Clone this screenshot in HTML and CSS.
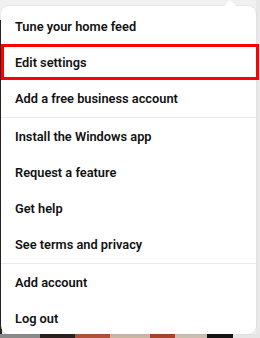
FILE: index.html
```html
<!DOCTYPE html>
<html lang="en">
<head>
  <meta charset="UTF-8" />
  <title>Account menu</title>
  <link rel="stylesheet" href="styles.css">
</head>
<body>
  <div class="menu">
    <span class="arrow"></span>
    <div class="item">Tune your home feed</div>
    <div class="item active">Edit settings</div>
    <div class="item">Add a free business account</div>
    <div class="sep"></div>
    <div class="item">Install the Windows app</div>
    <div class="item">Request a feature</div>
    <div class="item">Get help</div>
    <div class="item">See terms and privacy</div>
    <div class="sep"></div>
    <div class="item">Add account</div>
    <div class="item">Log out</div>
  </div>
</body>
</html>
```

FILE: styles.css
```css
* {
  margin: 0;
  padding: 0;
  box-sizing: border-box;
}
body {
  width: 260px;
  height: 338px;
  overflow: hidden;
  font-family: Roboto, "Noto Sans", Arial, sans-serif;
  background:
    linear-gradient(to right, #8a8a8a 0 40px, #2b2220 40px 75px, #b0513a 75px 110px, #c9b7a4 110px 150px, #a8432e 150px 175px, #cbbfb1 175px 207px, #141414 207px 233px, #e6e6e6 233px) bottom / 100% 4px no-repeat,
    linear-gradient(to right, #2d2222 0 2px, transparent 2px) 0 20px / 100% 100% no-repeat,
    linear-gradient(to right, transparent 256px, #e8e8e8 256px),
    #f1f1f1;
  padding: 6px 4px 4px 1px;
}
.menu {
  position: relative;
  background: #fff;
  border-radius: 8px;
  box-shadow: 0 0 2px rgba(0, 0, 0, 0.12);
  padding: 2px 0 0;
  height: 328px;
}
.arrow {
  position: absolute;
  top: -6px;
  left: 221px;
  width: 16px;
  height: 8px;
  background: #fff;
  clip-path: polygon(0 100%, 50% 0, 100% 100%);
}
.item {
  height: 36px;
  display: flex;
  align-items: center;
  padding-left: 14px;
  font-size: 12.8px;
  font-weight: 600;
  color: #111;
}
.item.active {
  outline: 3px solid #f00;
  outline-offset: -3px;
  margin: 0 -3px 0 0;
}
.sep {
  height: 1px;
  margin: 1px 0 0;
  background: #ebebeb;
}
```
